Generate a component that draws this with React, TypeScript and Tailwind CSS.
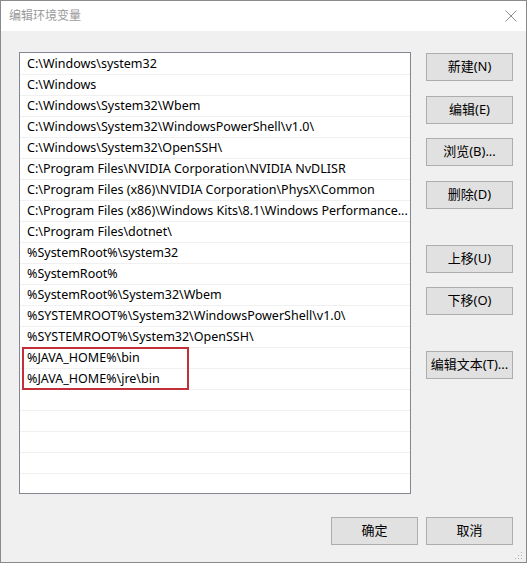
import React from "react";

const paths: string[] = [
  "C:\\Windows\\system32",
  "C:\\Windows",
  "C:\\Windows\\System32\\Wbem",
  "C:\\Windows\\System32\\WindowsPowerShell\\v1.0\\",
  "C:\\Windows\\System32\\OpenSSH\\",
  "C:\\Program Files\\NVIDIA Corporation\\NVIDIA NvDLISR",
  "C:\\Program Files (x86)\\NVIDIA Corporation\\PhysX\\Common",
  "C:\\Program Files (x86)\\Windows Kits\\8.1\\Windows Performance...",
  "C:\\Program Files\\dotnet\\",
  "%SystemRoot%\\system32",
  "%SystemRoot%",
  "%SystemRoot%\\System32\\Wbem",
  "%SYSTEMROOT%\\System32\\WindowsPowerShell\\v1.0\\",
  "%SYSTEMROOT%\\System32\\OpenSSH\\",
  "%JAVA_HOME%\\bin",
  "%JAVA_HOME%\\jre\\bin",
  "",
  "",
  "",
  "",
  "",
];

type SideButton = { label: string; gap: string };

const sideButtons: SideButton[] = [
  { label: "新建(N)", gap: "mt-px" },
  { label: "编辑(E)", gap: "mt-[15px]" },
  { label: "浏览(B)...", gap: "mt-[14px]" },
  { label: "删除(D)", gap: "mt-[15px]" },
  { label: "上移(U)", gap: "mt-[36px]" },
  { label: "下移(O)", gap: "mt-[14px]" },
  { label: "编辑文本(T)...", gap: "mt-[36px]" },
];

function WinButton({ label, className = "" }: { label: string; className?: string }) {
  return (
    <button
      type="button"
      className={`flex h-[28px] w-[87px] items-center justify-center border border-[#adadad] bg-[#e1e1e1] text-[13px] text-black ${className}`}
    >
      {label}
    </button>
  );
}

export default function App() {
  return (
    <div
      className="relative flex h-[563px] w-[527px] flex-col border border-[#8a8a8a] bg-[#f0f0f0]"
      style={{ fontFamily: '"Noto Sans", "Noto Sans CJK SC", sans-serif' }}
    >
      {/* title bar */}
      <div className="flex h-[30px] items-center justify-between bg-white pl-[8px] pr-[8px]">
        <span className="text-[12px] text-[#9a9a9a]">编辑环境变量</span>
        <svg width="12" height="12" viewBox="0 0 12 12" className="mr-[1px]">
          <path d="M0.5 0.5 L11.5 11.5 M11.5 0.5 L0.5 11.5" stroke="#8c8c8c" strokeWidth="1" />
        </svg>
      </div>

      <div className="flex flex-1 flex-col pl-[18px] pt-[21px]">
        <div className="flex">
          {/* path list */}
          <div className="relative h-[442px] w-[392px] overflow-hidden border border-[#828790] bg-white pt-px">
            {paths.map((p, i) => (
              <div
                key={i}
                className="flex h-[21px] items-center overflow-hidden whitespace-nowrap border-b border-[#f0f0f0] pl-[7px] text-[12.5px] leading-none text-black"
              >
                {p}
              </div>
            ))}
            <div className="absolute left-[2px] top-[294px] h-[43px] w-[167px] border-2 border-[#c4303a]" />
          </div>

          {/* action buttons */}
          <div className="ml-[15px] flex flex-col">
            {sideButtons.map((b) => (
              <WinButton key={b.label} label={b.label} className={b.gap} />
            ))}
          </div>
        </div>

        <div className="mt-[23px] flex gap-[8px] pl-[312px]">
          <WinButton label="确定" />
          <WinButton label="取消" />
        </div>
      </div>

      {/* resize grip */}
      <svg width="8" height="8" viewBox="0 0 8 8" className="absolute bottom-[2px] right-[3px]">
        <rect x="6" y="0" width="1" height="1" fill="#b0b0b0" />
        <rect x="3" y="3" width="1" height="1" fill="#b0b0b0" />
        <rect x="6" y="3" width="1" height="1" fill="#b0b0b0" />
        <rect x="0" y="6" width="1" height="1" fill="#b0b0b0" />
        <rect x="3" y="6" width="1" height="1" fill="#b0b0b0" />
        <rect x="6" y="6" width="1" height="1" fill="#b0b0b0" />
      </svg>
    </div>
  );
}
